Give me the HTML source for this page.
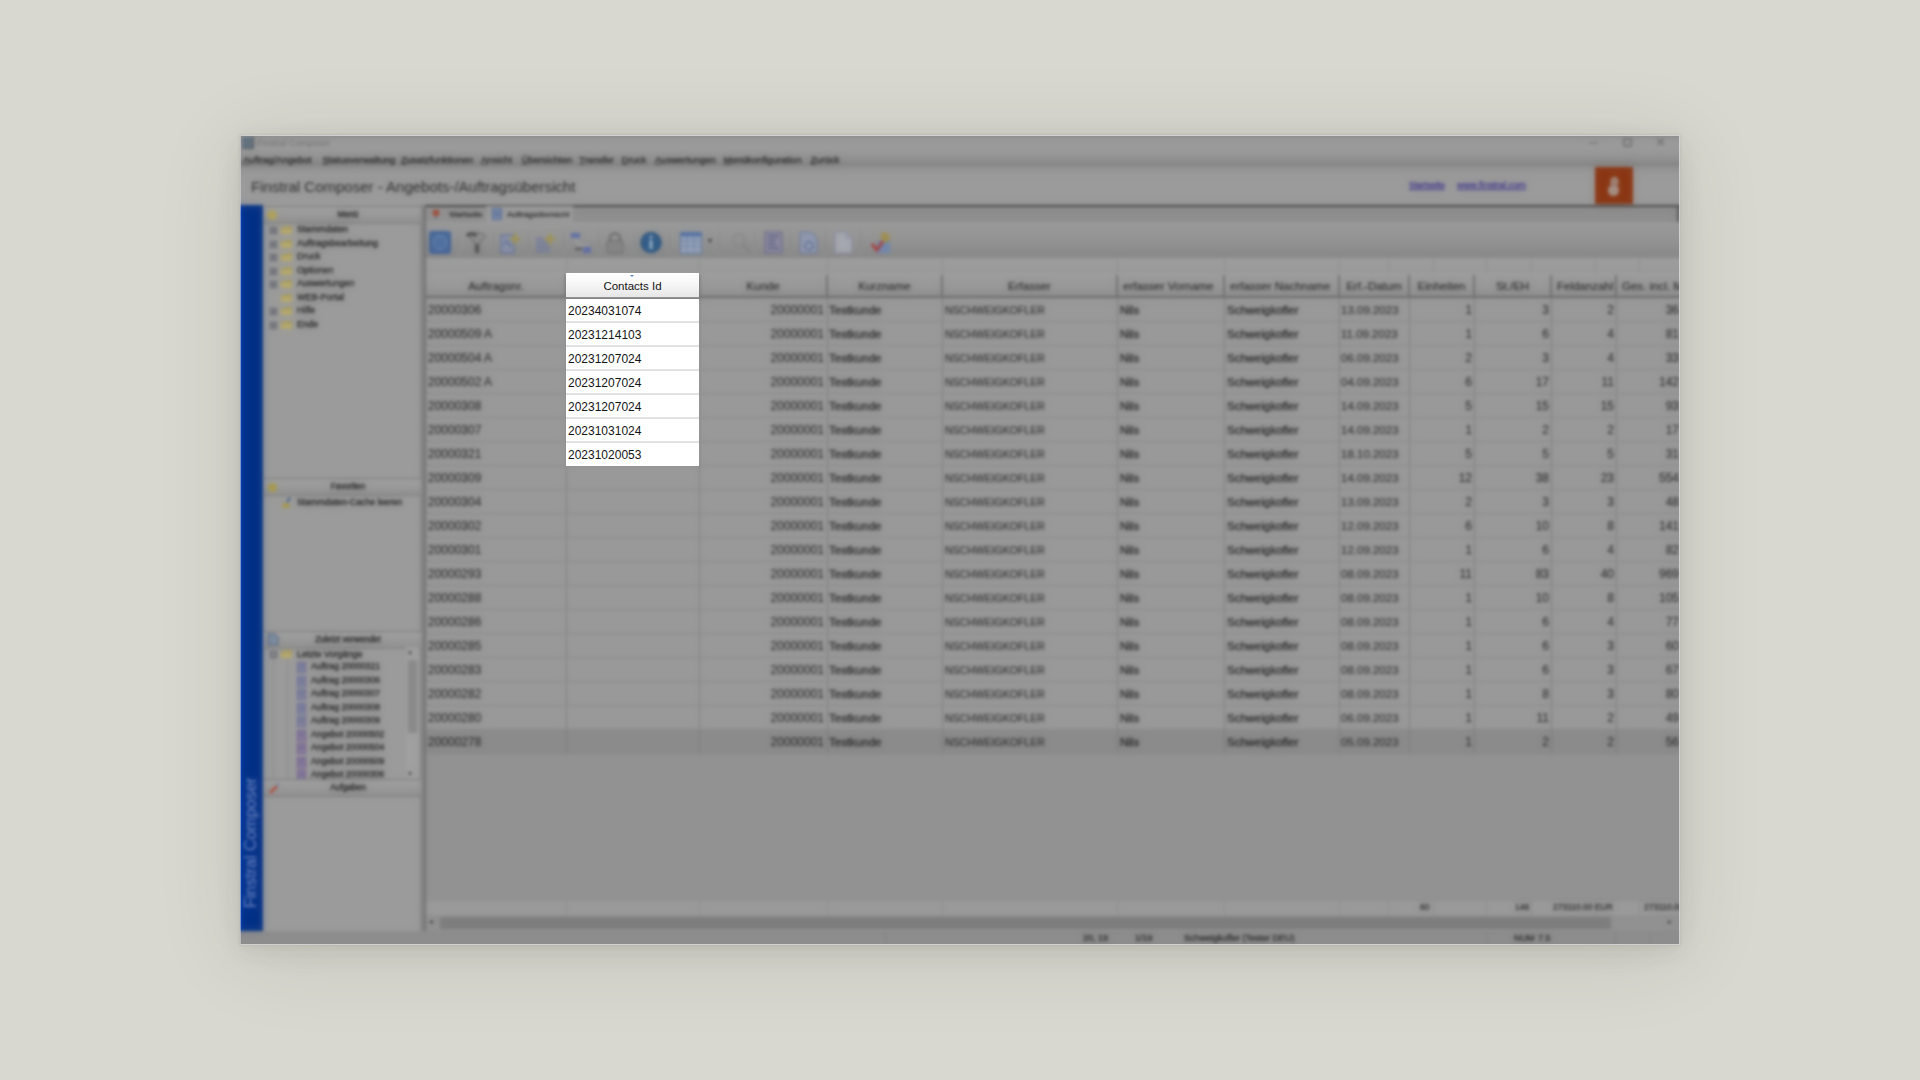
<!DOCTYPE html><html><head><meta charset="utf-8"><style>
html,body{margin:0;padding:0}
body{width:1920px;height:1080px;overflow:hidden;position:relative;background:#d8d8d0;font-family:"Liberation Sans",sans-serif}
#win{position:absolute;left:240px;top:135px;width:1440px;height:810px;overflow:hidden;box-shadow:0 0 3px rgba(40,40,30,0.10),0 6px 24px rgba(50,50,30,0.10),0 10px 80px rgba(50,50,30,0.12)}
#app{position:absolute;left:-240px;top:-135px;width:1920px;height:1080px;filter:url(#bl)}
#bord{position:absolute;left:0;top:0;width:1440px;height:810px;box-sizing:border-box;border:1px solid rgba(225,225,225,0.8);border-left-color:rgba(225,225,225,0.55)}
.t{position:absolute;white-space:nowrap;font-size:11.5px;line-height:14px;color:#1c1c1c}
.g{-webkit-text-stroke:0.1px #1c1c1c}
#hl{position:absolute;left:566px;top:273px;width:133px}
</style></head><body>
<svg width="0" height="0" style="position:absolute"><filter id="bl" x="-5%" y="-5%" width="110%" height="110%" color-interpolation-filters="sRGB"><feGaussianBlur in="SourceGraphic" stdDeviation="1.6" result="a"/><feGaussianBlur in="SourceGraphic" stdDeviation="4" result="b"/><feComposite in="a" in2="b" operator="arithmetic" k1="0" k2="0.7" k3="0.3" k4="0"/></filter></svg>
<div id="win"><div id="app">
<div style="position:absolute;left:220px;top:115px;width:1480px;height:850px;background:#999999"></div>
<div style="position:absolute;left:220px;top:115px;width:1480px;height:35px;background:linear-gradient(#8e8e8e 0,#8e8e8e 20px,#9a9a9a 26px,#9b9b9b)"></div>
<div style="position:absolute;left:242px;top:137px;width:12px;height:12px;background:#5e6e7c;border-right:1px solid #4a4a4a;border-bottom:1px solid #4a4a4a;box-sizing:border-box"></div>
<div class="t " style="left:257px;top:136px;font-size:9px;color:#6c6c6c">Finstral Composer</div>
<div style="position:absolute;left:1589px;top:142px;width:9px;height:2px;background:#7a7a7a"></div>
<div style="position:absolute;left:1623px;top:138px;width:9px;height:9px;border:2px solid #727272;box-sizing:border-box"></div>
<div class="t " style="left:1656px;top:135px;font-size:11px;color:#6e6e6e;-webkit-text-stroke:0.6px #6e6e6e">&#10005;</div>
<div style="position:absolute;left:220px;top:150px;width:1480px;height:16px;background:linear-gradient(#9a9a9a,#939393 45%,#828282)"></div>
<div class="t " style="left:243px;top:154px;font-size:9.5px;line-height:12px;color:#141414;-webkit-text-stroke:0.25px #141414"><u style="text-decoration-color:rgba(0,0,0,0.5)">A</u>uftrag/Angebot</div>
<div class="t " style="left:322.5px;top:154px;font-size:9.5px;line-height:12px;color:#141414;-webkit-text-stroke:0.25px #141414"><u style="text-decoration-color:rgba(0,0,0,0.5)">S</u>tatusverwaltung</div>
<div class="t " style="left:401px;top:154px;font-size:9.5px;line-height:12px;color:#141414;-webkit-text-stroke:0.25px #141414"><u style="text-decoration-color:rgba(0,0,0,0.5)">Z</u>usatzfunktionen</div>
<div class="t " style="left:481px;top:154px;font-size:9.5px;line-height:12px;color:#141414;-webkit-text-stroke:0.25px #141414"><u style="text-decoration-color:rgba(0,0,0,0.5)">A</u>nsicht</div>
<div class="t " style="left:521.5px;top:154px;font-size:9.5px;line-height:12px;color:#141414;-webkit-text-stroke:0.25px #141414"><u style="text-decoration-color:rgba(0,0,0,0.5)">Ü</u>bersichten</div>
<div class="t " style="left:579px;top:154px;font-size:9.5px;line-height:12px;color:#141414;-webkit-text-stroke:0.25px #141414"><u style="text-decoration-color:rgba(0,0,0,0.5)">T</u>ransfer</div>
<div class="t " style="left:621.5px;top:154px;font-size:9.5px;line-height:12px;color:#141414;-webkit-text-stroke:0.25px #141414"><u style="text-decoration-color:rgba(0,0,0,0.5)">D</u>ruck</div>
<div class="t " style="left:655px;top:154px;font-size:9.5px;line-height:12px;color:#141414;-webkit-text-stroke:0.25px #141414"><u style="text-decoration-color:rgba(0,0,0,0.5)">A</u>uswertungen</div>
<div class="t " style="left:723.5px;top:154px;font-size:9.5px;line-height:12px;color:#141414;-webkit-text-stroke:0.25px #141414"><u style="text-decoration-color:rgba(0,0,0,0.5)">M</u>enükonfiguration</div>
<div class="t " style="left:810.5px;top:154px;font-size:9.5px;line-height:12px;color:#141414;-webkit-text-stroke:0.25px #141414"><u style="text-decoration-color:rgba(0,0,0,0.5)">Z</u>urück</div>
<div style="position:absolute;left:220px;top:166px;width:1480px;height:39px;background:linear-gradient(#8f8f8f,#9a9a9a 20%,#9b9b9b)"></div>
<div class="t " style="left:251px;top:178px;font-size:15px;line-height:18px;color:#1a1a1a">Finstral Composer - Angebots-/Auftragsübersicht</div>
<div class="t " style="left:1409px;top:180px;font-size:8.5px;line-height:11px;color:#2a2288;-webkit-text-stroke:0.2px #2a2288"><u>Startseite</u></div>
<div class="t " style="left:1457px;top:180px;font-size:9.2px;line-height:11px;color:#2a2288;-webkit-text-stroke:0.2px #2a2288"><u>www.finstral.com</u></div>
<div style="position:absolute;left:1595px;top:167px;width:38px;height:38px;background:#8a3410"></div>
<svg style="position:absolute;left:1604px;top:174px" width="20" height="26" viewBox="0 0 20 26"><ellipse cx="10.5" cy="8" rx="4.2" ry="5.5" fill="#a08a80"/><ellipse cx="9.5" cy="16.5" rx="5.5" ry="5.5" fill="#a89890"/><path d="M8 11 Q10 12 13 11" stroke="#8a6a60" stroke-width="1" fill="none"/></svg>
<div style="position:absolute;left:220px;top:205px;width:43px;height:726px;background:linear-gradient(90deg,#0644c2 0,#0644c2 21px,#003088 22px,#002e84 38px,#023086 43px)"></div>
<div class="t" style="left:244px;top:908px;transform:rotate(-90deg);transform-origin:0 0;font-size:16px;line-height:14px;color:#8296cc">Finstral Composer</div>
<div style="position:absolute;left:263px;top:205px;width:162px;height:726px;background:#9b9b9b"></div>
<div style="position:absolute;left:420px;top:205px;width:5px;height:726px;background:#848484"></div>
<div style="position:absolute;left:264px;top:206px;width:157px;height:16px;background:linear-gradient(#a0a0a0,#9a9a9a 45%,#8e8e8e);border-bottom:1px solid #7c7c7c;border-top:1px solid #727272"></div><div style="position:absolute;left:267px;top:210px;width:10px;height:10px;background:#b0a258;border-radius:50%"></div><div class="t " style="left:264px;top:208px;width:168px;text-align:center;font-size:8.3px;line-height:12px;color:#080808;-webkit-text-stroke:0.25px #080808">Menü</div>
<div style="position:absolute;left:270px;top:227.0px;width:7px;height:7px;border:1px solid #4a5060;box-sizing:border-box;background:#969696"><div style="position:absolute;left:1px;top:2px;width:3px;height:1px;background:#2a3040"></div><div style="position:absolute;left:2px;top:1px;width:1px;height:3px;background:#2a3040"></div></div>
<svg style="position:absolute;left:281px;top:225.0px" width="12" height="10" viewBox="0 0 12 10"><path d="M0 2 L4 2 L5 1 L11 1 L11 9 L0 9Z" fill="#a89a58"/><path d="M0 4 L11 4 L11 9 L0 9Z" fill="#b8aa66"/></svg>
<div class="t " style="left:297px;top:223.0px;font-size:9px;line-height:13px;color:#080808;-webkit-text-stroke:0.25px #080808">Stammdaten</div>
<div style="position:absolute;left:270px;top:240.5px;width:7px;height:7px;border:1px solid #4a5060;box-sizing:border-box;background:#969696"><div style="position:absolute;left:1px;top:2px;width:3px;height:1px;background:#2a3040"></div><div style="position:absolute;left:2px;top:1px;width:1px;height:3px;background:#2a3040"></div></div>
<svg style="position:absolute;left:281px;top:238.5px" width="12" height="10" viewBox="0 0 12 10"><path d="M0 2 L4 2 L5 1 L11 1 L11 9 L0 9Z" fill="#a89a58"/><path d="M0 4 L11 4 L11 9 L0 9Z" fill="#b8aa66"/></svg>
<div class="t " style="left:297px;top:236.5px;font-size:9px;line-height:13px;color:#080808;-webkit-text-stroke:0.25px #080808">Auftragsbearbeitung</div>
<div style="position:absolute;left:270px;top:254.0px;width:7px;height:7px;border:1px solid #4a5060;box-sizing:border-box;background:#969696"><div style="position:absolute;left:1px;top:2px;width:3px;height:1px;background:#2a3040"></div><div style="position:absolute;left:2px;top:1px;width:1px;height:3px;background:#2a3040"></div></div>
<svg style="position:absolute;left:281px;top:252.0px" width="12" height="10" viewBox="0 0 12 10"><path d="M0 2 L4 2 L5 1 L11 1 L11 9 L0 9Z" fill="#a89a58"/><path d="M0 4 L11 4 L11 9 L0 9Z" fill="#b8aa66"/></svg>
<div class="t " style="left:297px;top:250.0px;font-size:9px;line-height:13px;color:#080808;-webkit-text-stroke:0.25px #080808">Druck</div>
<div style="position:absolute;left:270px;top:267.5px;width:7px;height:7px;border:1px solid #4a5060;box-sizing:border-box;background:#969696"><div style="position:absolute;left:1px;top:2px;width:3px;height:1px;background:#2a3040"></div><div style="position:absolute;left:2px;top:1px;width:1px;height:3px;background:#2a3040"></div></div>
<svg style="position:absolute;left:281px;top:265.5px" width="12" height="10" viewBox="0 0 12 10"><path d="M0 2 L4 2 L5 1 L11 1 L11 9 L0 9Z" fill="#a89a58"/><path d="M0 4 L11 4 L11 9 L0 9Z" fill="#b8aa66"/></svg>
<div class="t " style="left:297px;top:263.5px;font-size:9px;line-height:13px;color:#080808;-webkit-text-stroke:0.25px #080808">Optionen</div>
<div style="position:absolute;left:270px;top:281.0px;width:7px;height:7px;border:1px solid #4a5060;box-sizing:border-box;background:#969696"><div style="position:absolute;left:1px;top:2px;width:3px;height:1px;background:#2a3040"></div><div style="position:absolute;left:2px;top:1px;width:1px;height:3px;background:#2a3040"></div></div>
<svg style="position:absolute;left:281px;top:279.0px" width="12" height="10" viewBox="0 0 12 10"><path d="M0 2 L4 2 L5 1 L11 1 L11 9 L0 9Z" fill="#a89a58"/><path d="M0 4 L11 4 L11 9 L0 9Z" fill="#b8aa66"/></svg>
<div class="t " style="left:297px;top:277.0px;font-size:9px;line-height:13px;color:#080808;-webkit-text-stroke:0.25px #080808">Auswertungen</div>
<svg style="position:absolute;left:281px;top:292.5px" width="12" height="10" viewBox="0 0 12 10"><path d="M0 2 L4 2 L5 1 L11 1 L11 9 L0 9Z" fill="#a89a58"/><path d="M0 4 L11 4 L11 9 L0 9Z" fill="#b8aa66"/></svg>
<div class="t " style="left:297px;top:290.5px;font-size:9px;line-height:13px;color:#080808;-webkit-text-stroke:0.25px #080808">WEB-Portal</div>
<div style="position:absolute;left:270px;top:308.0px;width:7px;height:7px;border:1px solid #4a5060;box-sizing:border-box;background:#969696"><div style="position:absolute;left:1px;top:2px;width:3px;height:1px;background:#2a3040"></div><div style="position:absolute;left:2px;top:1px;width:1px;height:3px;background:#2a3040"></div></div>
<svg style="position:absolute;left:281px;top:306.0px" width="12" height="10" viewBox="0 0 12 10"><path d="M0 2 L4 2 L5 1 L11 1 L11 9 L0 9Z" fill="#a89a58"/><path d="M0 4 L11 4 L11 9 L0 9Z" fill="#b8aa66"/></svg>
<div class="t " style="left:297px;top:304.0px;font-size:9px;line-height:13px;color:#080808;-webkit-text-stroke:0.25px #080808">Hilfe</div>
<div style="position:absolute;left:270px;top:321.5px;width:7px;height:7px;border:1px solid #4a5060;box-sizing:border-box;background:#969696"><div style="position:absolute;left:1px;top:2px;width:3px;height:1px;background:#2a3040"></div><div style="position:absolute;left:2px;top:1px;width:1px;height:3px;background:#2a3040"></div></div>
<svg style="position:absolute;left:281px;top:319.5px" width="12" height="10" viewBox="0 0 12 10"><path d="M0 2 L4 2 L5 1 L11 1 L11 9 L0 9Z" fill="#a89a58"/><path d="M0 4 L11 4 L11 9 L0 9Z" fill="#b8aa66"/></svg>
<div class="t " style="left:297px;top:317.5px;font-size:9px;line-height:13px;color:#080808;-webkit-text-stroke:0.25px #080808">Ende</div>
<div style="position:absolute;left:264px;top:478px;width:157px;height:16px;background:linear-gradient(#a0a0a0,#9a9a9a 45%,#8e8e8e);border-bottom:1px solid #7c7c7c;border-top:1px solid #727272"></div><div style="position:absolute;left:268px;top:483px;width:9px;height:9px;background:#a89a48;border-radius:50%"></div><div class="t " style="left:264px;top:480px;width:168px;text-align:center;font-size:8.3px;line-height:12px;color:#080808;-webkit-text-stroke:0.25px #080808">Favoriten</div>
<svg style="position:absolute;left:281px;top:497px" width="12" height="12" viewBox="0 0 12 12"><path d="M8 0 L10 1 L7 6 L5 5Z" fill="#3a5a90"/><path d="M2 6 L8 6 L9 11 L1 11Z" fill="#a89848"/></svg>
<div class="t " style="left:297px;top:496px;font-size:8.8px;line-height:13px;color:#080808;-webkit-text-stroke:0.25px #080808">Stammdaten-Cache leeren</div>
<div style="position:absolute;left:264px;top:631px;width:157px;height:16px;background:linear-gradient(#a0a0a0,#9a9a9a 45%,#8e8e8e);border-bottom:1px solid #7c7c7c;border-top:1px solid #727272"></div><svg style="position:absolute;left:267px;top:633px" width="12" height="13" viewBox="0 0 12 13"><path d="M1 1 L8 1 L11 4 L11 12 L1 12Z" fill="#7a8aa0" stroke="#4f6078" stroke-width="1"/></svg><div class="t " style="left:264px;top:633px;width:168px;text-align:center;font-size:8.3px;line-height:12px;color:#080808;-webkit-text-stroke:0.25px #080808">Zuletzt verwendet</div>
<div style="position:absolute;left:270px;top:651px;width:7px;height:7px;border:1px solid #4a5060;box-sizing:border-box;background:#969696"><div style="position:absolute;left:1px;top:2px;width:3px;height:1px;background:#3a4050"></div></div>
<svg style="position:absolute;left:281px;top:649px" width="12" height="10" viewBox="0 0 12 10"><path d="M0 2 L4 2 L5 1 L11 1 L11 9 L0 9Z" fill="#a89a58"/><path d="M0 4 L11 4 L11 9 L0 9Z" fill="#b8aa66"/></svg>
<div class="t " style="left:297px;top:647.5px;font-size:9px;line-height:13px;color:#080808;-webkit-text-stroke:0.25px #080808">Letzte Vorgänge</div>
<div style="position:absolute;left:273px;top:658px;width:1px;height:122px;border-left:1px dotted #707070"></div>
<div style="position:absolute;left:287px;top:660px;width:1px;height:118px;border-left:1px dotted #707070"></div>
<svg style="position:absolute;left:297px;top:662.0px" width="9" height="11" viewBox="0 0 9 11"><rect x="0.5" y="0.5" width="8" height="10" fill="#8a8aa0" stroke="#5a6090"/><path d="M2 3H7M2 5H7M2 7H7" stroke="#5a6090"/></svg>
<div class="t " style="left:311px;top:660.0px;font-size:8.7px;line-height:13px;color:#080808;-webkit-text-stroke:0.25px #080808">Auftrag 20000321</div>
<svg style="position:absolute;left:297px;top:675.5px" width="9" height="11" viewBox="0 0 9 11"><rect x="0.5" y="0.5" width="8" height="10" fill="#8a8aa0" stroke="#5a6090"/><path d="M2 3H7M2 5H7M2 7H7" stroke="#5a6090"/></svg>
<div class="t " style="left:311px;top:673.5px;font-size:8.7px;line-height:13px;color:#080808;-webkit-text-stroke:0.25px #080808">Auftrag 20000306</div>
<svg style="position:absolute;left:297px;top:689.0px" width="9" height="11" viewBox="0 0 9 11"><rect x="0.5" y="0.5" width="8" height="10" fill="#8a8aa0" stroke="#5a6090"/><path d="M2 3H7M2 5H7M2 7H7" stroke="#5a6090"/></svg>
<div class="t " style="left:311px;top:687.0px;font-size:8.7px;line-height:13px;color:#080808;-webkit-text-stroke:0.25px #080808">Auftrag 20000307</div>
<svg style="position:absolute;left:297px;top:702.5px" width="9" height="11" viewBox="0 0 9 11"><rect x="0.5" y="0.5" width="8" height="10" fill="#8a8aa0" stroke="#5a6090"/><path d="M2 3H7M2 5H7M2 7H7" stroke="#5a6090"/></svg>
<div class="t " style="left:311px;top:700.5px;font-size:8.7px;line-height:13px;color:#080808;-webkit-text-stroke:0.25px #080808">Auftrag 20000308</div>
<svg style="position:absolute;left:297px;top:716.0px" width="9" height="11" viewBox="0 0 9 11"><rect x="0.5" y="0.5" width="8" height="10" fill="#8a8aa0" stroke="#5a6090"/><path d="M2 3H7M2 5H7M2 7H7" stroke="#5a6090"/></svg>
<div class="t " style="left:311px;top:714.0px;font-size:8.7px;line-height:13px;color:#080808;-webkit-text-stroke:0.25px #080808">Auftrag 20000309</div>
<svg style="position:absolute;left:297px;top:729.5px" width="9" height="11" viewBox="0 0 9 11"><rect x="0.5" y="0.5" width="8" height="10" fill="#8a8aa0" stroke="#6a4a88"/><path d="M2 3H7M2 5H7M2 7H7" stroke="#6a4a88"/></svg>
<div class="t " style="left:311px;top:727.5px;font-size:8.7px;line-height:13px;color:#080808;-webkit-text-stroke:0.25px #080808">Angebot 20000502</div>
<svg style="position:absolute;left:297px;top:743.0px" width="9" height="11" viewBox="0 0 9 11"><rect x="0.5" y="0.5" width="8" height="10" fill="#8a8aa0" stroke="#6a4a88"/><path d="M2 3H7M2 5H7M2 7H7" stroke="#6a4a88"/></svg>
<div class="t " style="left:311px;top:741.0px;font-size:8.7px;line-height:13px;color:#080808;-webkit-text-stroke:0.25px #080808">Angebot 20000504</div>
<svg style="position:absolute;left:297px;top:756.5px" width="9" height="11" viewBox="0 0 9 11"><rect x="0.5" y="0.5" width="8" height="10" fill="#8a8aa0" stroke="#6a4a88"/><path d="M2 3H7M2 5H7M2 7H7" stroke="#6a4a88"/></svg>
<div class="t " style="left:311px;top:754.5px;font-size:8.7px;line-height:13px;color:#080808;-webkit-text-stroke:0.25px #080808">Angebot 20000509</div>
<svg style="position:absolute;left:297px;top:770.0px" width="9" height="11" viewBox="0 0 9 11"><rect x="0.5" y="0.5" width="8" height="10" fill="#8a8aa0" stroke="#6a4a88"/><path d="M2 3H7M2 5H7M2 7H7" stroke="#6a4a88"/></svg>
<div class="t " style="left:311px;top:768.0px;font-size:8.7px;line-height:13px;color:#080808;-webkit-text-stroke:0.25px #080808">Angebot 20000306</div>
<div style="position:absolute;left:406px;top:647px;width:13px;height:133px;background:#a0a0a0"></div>
<div style="position:absolute;left:408px;top:660px;width:9px;height:73px;background:#888888;border-radius:1px"></div>
<div class="t " style="left:408px;top:648px;font-size:8px;line-height:8px;color:#404040">&#9652;</div>
<div class="t " style="left:408px;top:770px;font-size:8px;line-height:8px;color:#404040">&#9662;</div>
<div style="position:absolute;left:264px;top:779px;width:157px;height:16px;background:linear-gradient(#a0a0a0,#9a9a9a 45%,#8e8e8e);border-bottom:1px solid #7c7c7c;border-top:1px solid #727272"></div><svg style="position:absolute;left:267px;top:782px" width="12" height="12" viewBox="0 0 12 12"><path d="M2 10 L9 3 L11 5 L4 12Z" fill="#b04830"/><path d="M9 3 L11 1 L12 2 L11 5Z" fill="#6080b0"/></svg><div class="t " style="left:264px;top:781px;width:168px;text-align:center;font-size:8.3px;line-height:12px;color:#080808;-webkit-text-stroke:0.25px #080808">Aufgaben</div>
<div style="position:absolute;left:424px;top:204px;width:1280px;height:730px;background:#959595"></div>
<div style="position:absolute;left:424px;top:205px;width:1280px;height:2px;background:#3e3e3e"></div>
<div style="position:absolute;left:424px;top:205px;width:2px;height:726px;background:#6c6c6c"></div>
<div style="position:absolute;left:426px;top:207px;width:1260px;height:15px;background:#8e8e8e"></div>
<div style="position:absolute;left:1677px;top:205px;width:2px;height:17px;background:#4c4c4c"></div>
<div style="position:absolute;left:427px;top:207px;width:58px;height:15px;background:#929292"></div>
<svg style="position:absolute;left:431px;top:208px" width="10" height="11" viewBox="0 0 10 11"><circle cx="5" cy="5" r="3.5" fill="#a04830"/><path d="M5 7 L3 11 L7 11Z" fill="#6a7a90"/></svg>
<div class="t " style="left:449px;top:209px;font-size:8px;line-height:12px;color:#111;-webkit-text-stroke:0.2px #111">Startseite</div>
<div style="position:absolute;left:486px;top:206px;width:87px;height:16px;background:#9c9c9c"></div>
<svg style="position:absolute;left:492px;top:208px" width="10" height="12" viewBox="0 0 10 12"><rect x="0.5" y="0.5" width="9" height="11" fill="#7a8cac" stroke="#4a6090"/><path d="M2 4H8M2 6H8M2 8H8" stroke="#4a6090"/></svg>
<div class="t " style="left:507px;top:209px;font-size:8px;line-height:12px;color:#111;-webkit-text-stroke:0.2px #111">Auftragsübersicht</div>
<div style="position:absolute;left:426px;top:222px;width:1260px;height:36px;background:linear-gradient(#9a9a9a,#939393 50%,#868686)"></div>
<svg style="position:absolute;left:429px;top:231px" width="22" height="23" viewBox="0 0 22 23"><rect x="0" y="0" width="22" height="23" rx="3" fill="#44669a"/><rect x="1" y="1" width="20" height="21" rx="2.5" fill="none" stroke="#385888" stroke-width="1"/><circle cx="11" cy="11.5" r="6.5" fill="none" stroke="#7590b4" stroke-width="1.3"/><circle cx="11" cy="11.5" r="2.8" fill="none" stroke="#7590b4" stroke-width="1"/></svg>
<svg style="position:absolute;left:465px;top:231px" width="22" height="23" viewBox="0 0 22 23"><path d="M3 4 C7 1 17 1 21 5 L14 12 L14 22 L10 20 L10 12 Z" fill="#8e8e8e" stroke="#5a5a5a" stroke-width="1"/><path d="M2 5 C4 2 9 2 11 5" stroke="#3c3c3c" stroke-width="3" fill="none"/><path d="M12 13 L12 22" stroke="#3c3c3c" stroke-width="2.5"/></svg>
<svg style="position:absolute;left:500px;top:231px" width="22" height="23" viewBox="0 0 22 23"><rect x="1" y="4" width="13" height="18" fill="#8690a8" stroke="#566494"/><path d="M3 14 L7 10 L11 16" stroke="#404a80" fill="none"/><path d="M15 1 L17 6 L22 8 L17 10 L15 15 L13 10 L8 8 L13 6Z" fill="#a0944e"/></svg>
<svg style="position:absolute;left:535px;top:231px" width="22" height="23" viewBox="0 0 22 23"><path d="M1 8H13M1 12H13M1 16H15M1 20H15" stroke="#6a74a0" stroke-width="2"/><path d="M15 1 L17 6 L22 8 L17 10 L15 15 L13 10 L8 8 L13 6Z" fill="#a0944e"/></svg>
<svg style="position:absolute;left:570px;top:231px" width="22" height="23" viewBox="0 0 22 23"><rect x="1" y="2" width="9" height="5" fill="#5a6aa8"/><path d="M6 8 C6 14 12 14 18 14" stroke="#b0b0b0" stroke-width="1.2" fill="none"/><rect x="13" y="16" width="8" height="6" fill="#5a6aa8"/><path d="M5 18H12" stroke="#444" stroke-width="2"/></svg>
<svg style="position:absolute;left:605px;top:231px" width="22" height="23" viewBox="0 0 22 23"><path d="M5 11 L5 7 C5 1 15 1 15 7 L15 11" stroke="#6a6a6a" stroke-width="2.5" fill="none"/><rect x="2" y="10" width="16" height="12" rx="2" fill="#858585" stroke="#666" stroke-width="1"/></svg>
<svg style="position:absolute;left:640px;top:231px" width="22" height="23" viewBox="0 0 22 23"><circle cx="11" cy="11.5" r="10.5" fill="#2a5886"/><circle cx="11" cy="11.5" r="10" fill="none" stroke="#1e4670" stroke-width="1"/><rect x="9.5" y="9" width="3" height="9" fill="#b0c0d0"/><circle cx="11" cy="6" r="1.6" fill="#b0c0d0"/></svg>
<svg style="position:absolute;left:680px;top:231px" width="22" height="23" viewBox="0 0 22 23"><rect x="0.5" y="1.5" width="21" height="21" fill="#94a2b8" stroke="#56709e"/><rect x="0.5" y="1.5" width="21" height="4" fill="#4d6ca4"/><path d="M1 10H21M1 15H21M7 6V22M14 6V22" stroke="#7082a2"/></svg>
<svg style="position:absolute;left:730px;top:231px" width="22" height="23" viewBox="0 0 22 23"><circle cx="9" cy="9" r="6" fill="none" stroke="#888" stroke-width="2"/><path d="M13 13 L20 21" stroke="#838383" stroke-width="3"/></svg>
<svg style="position:absolute;left:764px;top:231px" width="22" height="23" viewBox="0 0 22 23"><rect x="1" y="1" width="17" height="21" fill="#88889e" stroke="#606088"/><path d="M4 5H15M4 9H11M4 13H11M4 17H15" stroke="#5a5a80" stroke-width="1.5"/></svg>
<svg style="position:absolute;left:799px;top:231px" width="22" height="23" viewBox="0 0 22 23"><path d="M1 1 L12 1 L18 7 L18 22 L1 22Z" fill="#8e98ae" stroke="#647096"/><circle cx="10" cy="15" r="4" fill="none" stroke="#5a6890" stroke-width="1.5"/></svg>
<svg style="position:absolute;left:834px;top:231px" width="22" height="23" viewBox="0 0 22 23"><path d="M1 1 L12 1 L18 7 L18 22 L1 22Z" fill="#a6a8b0" stroke="#7e849c"/><path d="M12 1 L12 7 L18 7" stroke="#7e849c" fill="none"/></svg>
<svg style="position:absolute;left:871px;top:231px" width="22" height="23" viewBox="0 0 22 23"><rect x="6" y="10" width="13" height="12" fill="#7088b0"/><path d="M10 2 C16 0 21 4 18 10 L13 12 L10 6Z" fill="#a09048"/><path d="M1 13 L6 19 L12 10" stroke="#a83838" stroke-width="3" fill="none"/></svg>
<div style="position:absolute;left:458px;top:227px;width:1px;height:30px;background:linear-gradient(#969696,#848484,#969696)"></div>
<div style="position:absolute;left:493px;top:227px;width:1px;height:30px;background:linear-gradient(#969696,#848484,#969696)"></div>
<div style="position:absolute;left:527.5px;top:227px;width:1px;height:30px;background:linear-gradient(#969696,#848484,#969696)"></div>
<div style="position:absolute;left:563px;top:227px;width:1px;height:30px;background:linear-gradient(#969696,#848484,#969696)"></div>
<div style="position:absolute;left:598px;top:227px;width:1px;height:30px;background:linear-gradient(#969696,#848484,#969696)"></div>
<div style="position:absolute;left:633.5px;top:227px;width:1px;height:30px;background:linear-gradient(#969696,#848484,#969696)"></div>
<div style="position:absolute;left:668.5px;top:227px;width:1px;height:30px;background:linear-gradient(#969696,#848484,#969696)"></div>
<div style="position:absolute;left:719px;top:227px;width:1px;height:30px;background:linear-gradient(#969696,#848484,#969696)"></div>
<div style="position:absolute;left:754px;top:227px;width:1px;height:30px;background:linear-gradient(#969696,#848484,#969696)"></div>
<div style="position:absolute;left:789.5px;top:227px;width:1px;height:30px;background:linear-gradient(#969696,#848484,#969696)"></div>
<div style="position:absolute;left:824.5px;top:227px;width:1px;height:30px;background:linear-gradient(#969696,#848484,#969696)"></div>
<div style="position:absolute;left:860px;top:227px;width:1px;height:30px;background:linear-gradient(#969696,#848484,#969696)"></div>
<div class="t " style="left:708px;top:236px;font-size:8px;line-height:10px;color:#222">&#9662;</div>
<div style="position:absolute;left:426px;top:258px;width:1280px;height:15px;background:linear-gradient(#9e9e9e,#999999);border-bottom:1px solid #888"></div>
<div style="position:absolute;left:566px;top:258px;width:1px;height:15px;background:#8c8c8c"></div>
<div style="position:absolute;left:699px;top:258px;width:1px;height:15px;background:#8c8c8c"></div>
<div style="position:absolute;left:827px;top:258px;width:1px;height:15px;background:#8c8c8c"></div>
<div style="position:absolute;left:942px;top:258px;width:1px;height:15px;background:#8c8c8c"></div>
<div style="position:absolute;left:1117px;top:258px;width:1px;height:15px;background:#8c8c8c"></div>
<div style="position:absolute;left:1224px;top:258px;width:1px;height:15px;background:#8c8c8c"></div>
<div style="position:absolute;left:1339px;top:258px;width:1px;height:15px;background:#8c8c8c"></div>
<div style="position:absolute;left:1388px;top:258px;width:1px;height:15px;background:#8c8c8c"></div>
<div style="position:absolute;left:1433px;top:258px;width:1px;height:15px;background:#8c8c8c"></div>
<div style="position:absolute;left:1486px;top:258px;width:1px;height:15px;background:#8c8c8c"></div>
<div style="position:absolute;left:1531px;top:258px;width:1px;height:15px;background:#8c8c8c"></div>
<div style="position:absolute;left:1595px;top:258px;width:1px;height:15px;background:#8c8c8c"></div>
<div style="position:absolute;left:1639px;top:258px;width:1px;height:15px;background:#8c8c8c"></div>
<div style="position:absolute;left:426px;top:273px;width:1280px;height:25px;background:linear-gradient(#9e9e9e,#979797 60%,#8e8e8e)"></div>
<div style="position:absolute;left:426px;top:296px;width:1280px;height:2px;background:#616161"></div>
<div class="t " style="left:426px;top:279px;width:140px;text-align:center;font-size:11.5px;color:#141414;-webkit-text-stroke:0.1px #141414">Auftragsnr.</div>
<div style="position:absolute;left:565px;top:275px;width:2px;height:22px;background:#6a6a6a"></div>
<div class="t " style="left:566px;top:279px;width:133px;text-align:center;font-size:11.5px;color:#141414;-webkit-text-stroke:0.1px #141414">Contacts Id</div>
<div style="position:absolute;left:698px;top:275px;width:2px;height:22px;background:#6a6a6a"></div>
<div class="t " style="left:699px;top:279px;width:128px;text-align:center;font-size:11.5px;color:#141414;-webkit-text-stroke:0.1px #141414">Kunde</div>
<div style="position:absolute;left:826px;top:275px;width:2px;height:22px;background:#6a6a6a"></div>
<div class="t " style="left:827px;top:279px;width:115px;text-align:center;font-size:11.5px;color:#141414;-webkit-text-stroke:0.1px #141414">Kurzname</div>
<div style="position:absolute;left:941px;top:275px;width:2px;height:22px;background:#6a6a6a"></div>
<div class="t " style="left:942px;top:279px;width:175px;text-align:center;font-size:11.5px;color:#141414;-webkit-text-stroke:0.1px #141414">Erfasser</div>
<div style="position:absolute;left:1116px;top:275px;width:2px;height:22px;background:#6a6a6a"></div>
<div class="t " style="left:1123px;top:279px;font-size:11.5px;color:#141414;-webkit-text-stroke:0.1px #141414">erfasser Vorname</div>
<div style="position:absolute;left:1223px;top:275px;width:2px;height:22px;background:#6a6a6a"></div>
<div class="t " style="left:1230px;top:279px;font-size:11.5px;color:#141414;-webkit-text-stroke:0.1px #141414">erfasser Nachname</div>
<div style="position:absolute;left:1338px;top:275px;width:2px;height:22px;background:#6a6a6a"></div>
<div class="t " style="left:1339px;top:279px;width:70px;text-align:center;font-size:11.5px;color:#141414;-webkit-text-stroke:0.1px #141414">Erf.-Datum</div>
<div style="position:absolute;left:1408px;top:275px;width:2px;height:22px;background:#6a6a6a"></div>
<div class="t " style="left:1409px;top:279px;width:65px;text-align:center;font-size:11.5px;color:#141414;-webkit-text-stroke:0.1px #141414">Einheiten</div>
<div style="position:absolute;left:1473px;top:275px;width:2px;height:22px;background:#6a6a6a"></div>
<div class="t " style="left:1474px;top:279px;width:77px;text-align:center;font-size:11.5px;color:#141414;-webkit-text-stroke:0.1px #141414">St./EH</div>
<div style="position:absolute;left:1550px;top:275px;width:2px;height:22px;background:#6a6a6a"></div>
<div class="t " style="left:1557px;top:279px;font-size:11.5px;color:#141414;-webkit-text-stroke:0.1px #141414">Feldanzahl</div>
<div style="position:absolute;left:1615px;top:275px;width:2px;height:22px;background:#6a6a6a"></div>
<div class="t " style="left:1622px;top:279px;font-size:11.5px;color:#141414;-webkit-text-stroke:0.1px #141414">Ges. incl. M</div>
<div style="position:absolute;left:426px;top:298px;width:1280px;height:24px;background:#999999"></div>
<div style="position:absolute;left:426px;top:321px;width:1280px;height:1px;background:#868686"></div>
<div class="t g" style="left:428px;top:303px;font-size:12px">20000306</div>
<div class="t g" style="left:699px;top:303px;width:125px;text-align:right;font-size:12px">20000001</div>
<div class="t " style="left:829px;top:303px;font-size:11.5px;-webkit-text-stroke:0.35px #1c1c1c">Testkunde</div>
<div class="t g" style="left:945px;top:303px;font-size:10.5px">NSCHWEIGKOFLER</div>
<div class="t " style="left:1120px;top:303px;font-size:11.5px;-webkit-text-stroke:0.35px #1c1c1c">Nils</div>
<div class="t " style="left:1227px;top:303px;font-size:11.5px;-webkit-text-stroke:0.35px #1c1c1c">Schweigkofler</div>
<div class="t g" style="left:1341px;top:303px;font-size:11.5px">13.09.2023</div>
<div class="t g" style="left:1409px;top:303px;width:63px;text-align:right;font-size:12px">1</div>
<div class="t g" style="left:1474px;top:303px;width:75px;text-align:right;font-size:12px">3</div>
<div class="t g" style="left:1551px;top:303px;width:63px;text-align:right;font-size:12px">2</div>
<div class="t g" style="left:1616px;top:303px;width:63px;text-align:right;font-size:12px">36</div>
<div style="position:absolute;left:426px;top:322px;width:1280px;height:24px;background:#999999"></div>
<div style="position:absolute;left:426px;top:345px;width:1280px;height:1px;background:#868686"></div>
<div class="t g" style="left:428px;top:327px;font-size:12px">20000509 A</div>
<div class="t g" style="left:699px;top:327px;width:125px;text-align:right;font-size:12px">20000001</div>
<div class="t " style="left:829px;top:327px;font-size:11.5px;-webkit-text-stroke:0.35px #1c1c1c">Testkunde</div>
<div class="t g" style="left:945px;top:327px;font-size:10.5px">NSCHWEIGKOFLER</div>
<div class="t " style="left:1120px;top:327px;font-size:11.5px;-webkit-text-stroke:0.35px #1c1c1c">Nils</div>
<div class="t " style="left:1227px;top:327px;font-size:11.5px;-webkit-text-stroke:0.35px #1c1c1c">Schweigkofler</div>
<div class="t g" style="left:1341px;top:327px;font-size:11.5px">11.09.2023</div>
<div class="t g" style="left:1409px;top:327px;width:63px;text-align:right;font-size:12px">1</div>
<div class="t g" style="left:1474px;top:327px;width:75px;text-align:right;font-size:12px">6</div>
<div class="t g" style="left:1551px;top:327px;width:63px;text-align:right;font-size:12px">4</div>
<div class="t g" style="left:1616px;top:327px;width:63px;text-align:right;font-size:12px">81</div>
<div style="position:absolute;left:426px;top:346px;width:1280px;height:24px;background:#999999"></div>
<div style="position:absolute;left:426px;top:369px;width:1280px;height:1px;background:#868686"></div>
<div class="t g" style="left:428px;top:351px;font-size:12px">20000504 A</div>
<div class="t g" style="left:699px;top:351px;width:125px;text-align:right;font-size:12px">20000001</div>
<div class="t " style="left:829px;top:351px;font-size:11.5px;-webkit-text-stroke:0.35px #1c1c1c">Testkunde</div>
<div class="t g" style="left:945px;top:351px;font-size:10.5px">NSCHWEIGKOFLER</div>
<div class="t " style="left:1120px;top:351px;font-size:11.5px;-webkit-text-stroke:0.35px #1c1c1c">Nils</div>
<div class="t " style="left:1227px;top:351px;font-size:11.5px;-webkit-text-stroke:0.35px #1c1c1c">Schweigkofler</div>
<div class="t g" style="left:1341px;top:351px;font-size:11.5px">06.09.2023</div>
<div class="t g" style="left:1409px;top:351px;width:63px;text-align:right;font-size:12px">2</div>
<div class="t g" style="left:1474px;top:351px;width:75px;text-align:right;font-size:12px">3</div>
<div class="t g" style="left:1551px;top:351px;width:63px;text-align:right;font-size:12px">4</div>
<div class="t g" style="left:1616px;top:351px;width:63px;text-align:right;font-size:12px">33</div>
<div style="position:absolute;left:426px;top:370px;width:1280px;height:24px;background:#999999"></div>
<div style="position:absolute;left:426px;top:393px;width:1280px;height:1px;background:#868686"></div>
<div class="t g" style="left:428px;top:375px;font-size:12px">20000502 A</div>
<div class="t g" style="left:699px;top:375px;width:125px;text-align:right;font-size:12px">20000001</div>
<div class="t " style="left:829px;top:375px;font-size:11.5px;-webkit-text-stroke:0.35px #1c1c1c">Testkunde</div>
<div class="t g" style="left:945px;top:375px;font-size:10.5px">NSCHWEIGKOFLER</div>
<div class="t " style="left:1120px;top:375px;font-size:11.5px;-webkit-text-stroke:0.35px #1c1c1c">Nils</div>
<div class="t " style="left:1227px;top:375px;font-size:11.5px;-webkit-text-stroke:0.35px #1c1c1c">Schweigkofler</div>
<div class="t g" style="left:1341px;top:375px;font-size:11.5px">04.09.2023</div>
<div class="t g" style="left:1409px;top:375px;width:63px;text-align:right;font-size:12px">6</div>
<div class="t g" style="left:1474px;top:375px;width:75px;text-align:right;font-size:12px">17</div>
<div class="t g" style="left:1551px;top:375px;width:63px;text-align:right;font-size:12px">11</div>
<div class="t g" style="left:1616px;top:375px;width:63px;text-align:right;font-size:12px">142</div>
<div style="position:absolute;left:426px;top:394px;width:1280px;height:24px;background:#999999"></div>
<div style="position:absolute;left:426px;top:417px;width:1280px;height:1px;background:#868686"></div>
<div class="t g" style="left:428px;top:399px;font-size:12px">20000308</div>
<div class="t g" style="left:699px;top:399px;width:125px;text-align:right;font-size:12px">20000001</div>
<div class="t " style="left:829px;top:399px;font-size:11.5px;-webkit-text-stroke:0.35px #1c1c1c">Testkunde</div>
<div class="t g" style="left:945px;top:399px;font-size:10.5px">NSCHWEIGKOFLER</div>
<div class="t " style="left:1120px;top:399px;font-size:11.5px;-webkit-text-stroke:0.35px #1c1c1c">Nils</div>
<div class="t " style="left:1227px;top:399px;font-size:11.5px;-webkit-text-stroke:0.35px #1c1c1c">Schweigkofler</div>
<div class="t g" style="left:1341px;top:399px;font-size:11.5px">14.09.2023</div>
<div class="t g" style="left:1409px;top:399px;width:63px;text-align:right;font-size:12px">5</div>
<div class="t g" style="left:1474px;top:399px;width:75px;text-align:right;font-size:12px">15</div>
<div class="t g" style="left:1551px;top:399px;width:63px;text-align:right;font-size:12px">15</div>
<div class="t g" style="left:1616px;top:399px;width:63px;text-align:right;font-size:12px">93</div>
<div style="position:absolute;left:426px;top:418px;width:1280px;height:24px;background:#999999"></div>
<div style="position:absolute;left:426px;top:441px;width:1280px;height:1px;background:#868686"></div>
<div class="t g" style="left:428px;top:423px;font-size:12px">20000307</div>
<div class="t g" style="left:699px;top:423px;width:125px;text-align:right;font-size:12px">20000001</div>
<div class="t " style="left:829px;top:423px;font-size:11.5px;-webkit-text-stroke:0.35px #1c1c1c">Testkunde</div>
<div class="t g" style="left:945px;top:423px;font-size:10.5px">NSCHWEIGKOFLER</div>
<div class="t " style="left:1120px;top:423px;font-size:11.5px;-webkit-text-stroke:0.35px #1c1c1c">Nils</div>
<div class="t " style="left:1227px;top:423px;font-size:11.5px;-webkit-text-stroke:0.35px #1c1c1c">Schweigkofler</div>
<div class="t g" style="left:1341px;top:423px;font-size:11.5px">14.09.2023</div>
<div class="t g" style="left:1409px;top:423px;width:63px;text-align:right;font-size:12px">1</div>
<div class="t g" style="left:1474px;top:423px;width:75px;text-align:right;font-size:12px">2</div>
<div class="t g" style="left:1551px;top:423px;width:63px;text-align:right;font-size:12px">2</div>
<div class="t g" style="left:1616px;top:423px;width:63px;text-align:right;font-size:12px">17</div>
<div style="position:absolute;left:426px;top:442px;width:1280px;height:24px;background:#999999"></div>
<div style="position:absolute;left:426px;top:465px;width:1280px;height:1px;background:#868686"></div>
<div class="t g" style="left:428px;top:447px;font-size:12px">20000321</div>
<div class="t g" style="left:699px;top:447px;width:125px;text-align:right;font-size:12px">20000001</div>
<div class="t " style="left:829px;top:447px;font-size:11.5px;-webkit-text-stroke:0.35px #1c1c1c">Testkunde</div>
<div class="t g" style="left:945px;top:447px;font-size:10.5px">NSCHWEIGKOFLER</div>
<div class="t " style="left:1120px;top:447px;font-size:11.5px;-webkit-text-stroke:0.35px #1c1c1c">Nils</div>
<div class="t " style="left:1227px;top:447px;font-size:11.5px;-webkit-text-stroke:0.35px #1c1c1c">Schweigkofler</div>
<div class="t g" style="left:1341px;top:447px;font-size:11.5px">18.10.2023</div>
<div class="t g" style="left:1409px;top:447px;width:63px;text-align:right;font-size:12px">5</div>
<div class="t g" style="left:1474px;top:447px;width:75px;text-align:right;font-size:12px">5</div>
<div class="t g" style="left:1551px;top:447px;width:63px;text-align:right;font-size:12px">5</div>
<div class="t g" style="left:1616px;top:447px;width:63px;text-align:right;font-size:12px">31</div>
<div style="position:absolute;left:426px;top:466px;width:1280px;height:24px;background:#999999"></div>
<div style="position:absolute;left:426px;top:489px;width:1280px;height:1px;background:#868686"></div>
<div class="t g" style="left:428px;top:471px;font-size:12px">20000309</div>
<div class="t g" style="left:699px;top:471px;width:125px;text-align:right;font-size:12px">20000001</div>
<div class="t " style="left:829px;top:471px;font-size:11.5px;-webkit-text-stroke:0.35px #1c1c1c">Testkunde</div>
<div class="t g" style="left:945px;top:471px;font-size:10.5px">NSCHWEIGKOFLER</div>
<div class="t " style="left:1120px;top:471px;font-size:11.5px;-webkit-text-stroke:0.35px #1c1c1c">Nils</div>
<div class="t " style="left:1227px;top:471px;font-size:11.5px;-webkit-text-stroke:0.35px #1c1c1c">Schweigkofler</div>
<div class="t g" style="left:1341px;top:471px;font-size:11.5px">14.09.2023</div>
<div class="t g" style="left:1409px;top:471px;width:63px;text-align:right;font-size:12px">12</div>
<div class="t g" style="left:1474px;top:471px;width:75px;text-align:right;font-size:12px">38</div>
<div class="t g" style="left:1551px;top:471px;width:63px;text-align:right;font-size:12px">23</div>
<div class="t g" style="left:1616px;top:471px;width:63px;text-align:right;font-size:12px">554</div>
<div style="position:absolute;left:426px;top:490px;width:1280px;height:24px;background:#999999"></div>
<div style="position:absolute;left:426px;top:513px;width:1280px;height:1px;background:#868686"></div>
<div class="t g" style="left:428px;top:495px;font-size:12px">20000304</div>
<div class="t g" style="left:699px;top:495px;width:125px;text-align:right;font-size:12px">20000001</div>
<div class="t " style="left:829px;top:495px;font-size:11.5px;-webkit-text-stroke:0.35px #1c1c1c">Testkunde</div>
<div class="t g" style="left:945px;top:495px;font-size:10.5px">NSCHWEIGKOFLER</div>
<div class="t " style="left:1120px;top:495px;font-size:11.5px;-webkit-text-stroke:0.35px #1c1c1c">Nils</div>
<div class="t " style="left:1227px;top:495px;font-size:11.5px;-webkit-text-stroke:0.35px #1c1c1c">Schweigkofler</div>
<div class="t g" style="left:1341px;top:495px;font-size:11.5px">13.09.2023</div>
<div class="t g" style="left:1409px;top:495px;width:63px;text-align:right;font-size:12px">2</div>
<div class="t g" style="left:1474px;top:495px;width:75px;text-align:right;font-size:12px">3</div>
<div class="t g" style="left:1551px;top:495px;width:63px;text-align:right;font-size:12px">3</div>
<div class="t g" style="left:1616px;top:495px;width:63px;text-align:right;font-size:12px">48</div>
<div style="position:absolute;left:426px;top:514px;width:1280px;height:24px;background:#999999"></div>
<div style="position:absolute;left:426px;top:537px;width:1280px;height:1px;background:#868686"></div>
<div class="t g" style="left:428px;top:519px;font-size:12px">20000302</div>
<div class="t g" style="left:699px;top:519px;width:125px;text-align:right;font-size:12px">20000001</div>
<div class="t " style="left:829px;top:519px;font-size:11.5px;-webkit-text-stroke:0.35px #1c1c1c">Testkunde</div>
<div class="t g" style="left:945px;top:519px;font-size:10.5px">NSCHWEIGKOFLER</div>
<div class="t " style="left:1120px;top:519px;font-size:11.5px;-webkit-text-stroke:0.35px #1c1c1c">Nils</div>
<div class="t " style="left:1227px;top:519px;font-size:11.5px;-webkit-text-stroke:0.35px #1c1c1c">Schweigkofler</div>
<div class="t g" style="left:1341px;top:519px;font-size:11.5px">12.09.2023</div>
<div class="t g" style="left:1409px;top:519px;width:63px;text-align:right;font-size:12px">6</div>
<div class="t g" style="left:1474px;top:519px;width:75px;text-align:right;font-size:12px">10</div>
<div class="t g" style="left:1551px;top:519px;width:63px;text-align:right;font-size:12px">8</div>
<div class="t g" style="left:1616px;top:519px;width:63px;text-align:right;font-size:12px">141</div>
<div style="position:absolute;left:426px;top:538px;width:1280px;height:24px;background:#999999"></div>
<div style="position:absolute;left:426px;top:561px;width:1280px;height:1px;background:#868686"></div>
<div class="t g" style="left:428px;top:543px;font-size:12px">20000301</div>
<div class="t g" style="left:699px;top:543px;width:125px;text-align:right;font-size:12px">20000001</div>
<div class="t " style="left:829px;top:543px;font-size:11.5px;-webkit-text-stroke:0.35px #1c1c1c">Testkunde</div>
<div class="t g" style="left:945px;top:543px;font-size:10.5px">NSCHWEIGKOFLER</div>
<div class="t " style="left:1120px;top:543px;font-size:11.5px;-webkit-text-stroke:0.35px #1c1c1c">Nils</div>
<div class="t " style="left:1227px;top:543px;font-size:11.5px;-webkit-text-stroke:0.35px #1c1c1c">Schweigkofler</div>
<div class="t g" style="left:1341px;top:543px;font-size:11.5px">12.09.2023</div>
<div class="t g" style="left:1409px;top:543px;width:63px;text-align:right;font-size:12px">1</div>
<div class="t g" style="left:1474px;top:543px;width:75px;text-align:right;font-size:12px">6</div>
<div class="t g" style="left:1551px;top:543px;width:63px;text-align:right;font-size:12px">4</div>
<div class="t g" style="left:1616px;top:543px;width:63px;text-align:right;font-size:12px">82</div>
<div style="position:absolute;left:426px;top:562px;width:1280px;height:24px;background:#999999"></div>
<div style="position:absolute;left:426px;top:585px;width:1280px;height:1px;background:#868686"></div>
<div class="t g" style="left:428px;top:567px;font-size:12px">20000293</div>
<div class="t g" style="left:699px;top:567px;width:125px;text-align:right;font-size:12px">20000001</div>
<div class="t " style="left:829px;top:567px;font-size:11.5px;-webkit-text-stroke:0.35px #1c1c1c">Testkunde</div>
<div class="t g" style="left:945px;top:567px;font-size:10.5px">NSCHWEIGKOFLER</div>
<div class="t " style="left:1120px;top:567px;font-size:11.5px;-webkit-text-stroke:0.35px #1c1c1c">Nils</div>
<div class="t " style="left:1227px;top:567px;font-size:11.5px;-webkit-text-stroke:0.35px #1c1c1c">Schweigkofler</div>
<div class="t g" style="left:1341px;top:567px;font-size:11.5px">08.09.2023</div>
<div class="t g" style="left:1409px;top:567px;width:63px;text-align:right;font-size:12px">11</div>
<div class="t g" style="left:1474px;top:567px;width:75px;text-align:right;font-size:12px">83</div>
<div class="t g" style="left:1551px;top:567px;width:63px;text-align:right;font-size:12px">40</div>
<div class="t g" style="left:1616px;top:567px;width:63px;text-align:right;font-size:12px">969</div>
<div style="position:absolute;left:426px;top:586px;width:1280px;height:24px;background:#999999"></div>
<div style="position:absolute;left:426px;top:609px;width:1280px;height:1px;background:#868686"></div>
<div class="t g" style="left:428px;top:591px;font-size:12px">20000288</div>
<div class="t g" style="left:699px;top:591px;width:125px;text-align:right;font-size:12px">20000001</div>
<div class="t " style="left:829px;top:591px;font-size:11.5px;-webkit-text-stroke:0.35px #1c1c1c">Testkunde</div>
<div class="t g" style="left:945px;top:591px;font-size:10.5px">NSCHWEIGKOFLER</div>
<div class="t " style="left:1120px;top:591px;font-size:11.5px;-webkit-text-stroke:0.35px #1c1c1c">Nils</div>
<div class="t " style="left:1227px;top:591px;font-size:11.5px;-webkit-text-stroke:0.35px #1c1c1c">Schweigkofler</div>
<div class="t g" style="left:1341px;top:591px;font-size:11.5px">08.09.2023</div>
<div class="t g" style="left:1409px;top:591px;width:63px;text-align:right;font-size:12px">1</div>
<div class="t g" style="left:1474px;top:591px;width:75px;text-align:right;font-size:12px">10</div>
<div class="t g" style="left:1551px;top:591px;width:63px;text-align:right;font-size:12px">8</div>
<div class="t g" style="left:1616px;top:591px;width:63px;text-align:right;font-size:12px">105</div>
<div style="position:absolute;left:426px;top:610px;width:1280px;height:24px;background:#999999"></div>
<div style="position:absolute;left:426px;top:633px;width:1280px;height:1px;background:#868686"></div>
<div class="t g" style="left:428px;top:615px;font-size:12px">20000286</div>
<div class="t g" style="left:699px;top:615px;width:125px;text-align:right;font-size:12px">20000001</div>
<div class="t " style="left:829px;top:615px;font-size:11.5px;-webkit-text-stroke:0.35px #1c1c1c">Testkunde</div>
<div class="t g" style="left:945px;top:615px;font-size:10.5px">NSCHWEIGKOFLER</div>
<div class="t " style="left:1120px;top:615px;font-size:11.5px;-webkit-text-stroke:0.35px #1c1c1c">Nils</div>
<div class="t " style="left:1227px;top:615px;font-size:11.5px;-webkit-text-stroke:0.35px #1c1c1c">Schweigkofler</div>
<div class="t g" style="left:1341px;top:615px;font-size:11.5px">08.09.2023</div>
<div class="t g" style="left:1409px;top:615px;width:63px;text-align:right;font-size:12px">1</div>
<div class="t g" style="left:1474px;top:615px;width:75px;text-align:right;font-size:12px">6</div>
<div class="t g" style="left:1551px;top:615px;width:63px;text-align:right;font-size:12px">4</div>
<div class="t g" style="left:1616px;top:615px;width:63px;text-align:right;font-size:12px">77</div>
<div style="position:absolute;left:426px;top:634px;width:1280px;height:24px;background:#999999"></div>
<div style="position:absolute;left:426px;top:657px;width:1280px;height:1px;background:#868686"></div>
<div class="t g" style="left:428px;top:639px;font-size:12px">20000285</div>
<div class="t g" style="left:699px;top:639px;width:125px;text-align:right;font-size:12px">20000001</div>
<div class="t " style="left:829px;top:639px;font-size:11.5px;-webkit-text-stroke:0.35px #1c1c1c">Testkunde</div>
<div class="t g" style="left:945px;top:639px;font-size:10.5px">NSCHWEIGKOFLER</div>
<div class="t " style="left:1120px;top:639px;font-size:11.5px;-webkit-text-stroke:0.35px #1c1c1c">Nils</div>
<div class="t " style="left:1227px;top:639px;font-size:11.5px;-webkit-text-stroke:0.35px #1c1c1c">Schweigkofler</div>
<div class="t g" style="left:1341px;top:639px;font-size:11.5px">08.09.2023</div>
<div class="t g" style="left:1409px;top:639px;width:63px;text-align:right;font-size:12px">1</div>
<div class="t g" style="left:1474px;top:639px;width:75px;text-align:right;font-size:12px">6</div>
<div class="t g" style="left:1551px;top:639px;width:63px;text-align:right;font-size:12px">3</div>
<div class="t g" style="left:1616px;top:639px;width:63px;text-align:right;font-size:12px">60</div>
<div style="position:absolute;left:426px;top:658px;width:1280px;height:24px;background:#999999"></div>
<div style="position:absolute;left:426px;top:681px;width:1280px;height:1px;background:#868686"></div>
<div class="t g" style="left:428px;top:663px;font-size:12px">20000283</div>
<div class="t g" style="left:699px;top:663px;width:125px;text-align:right;font-size:12px">20000001</div>
<div class="t " style="left:829px;top:663px;font-size:11.5px;-webkit-text-stroke:0.35px #1c1c1c">Testkunde</div>
<div class="t g" style="left:945px;top:663px;font-size:10.5px">NSCHWEIGKOFLER</div>
<div class="t " style="left:1120px;top:663px;font-size:11.5px;-webkit-text-stroke:0.35px #1c1c1c">Nils</div>
<div class="t " style="left:1227px;top:663px;font-size:11.5px;-webkit-text-stroke:0.35px #1c1c1c">Schweigkofler</div>
<div class="t g" style="left:1341px;top:663px;font-size:11.5px">08.09.2023</div>
<div class="t g" style="left:1409px;top:663px;width:63px;text-align:right;font-size:12px">1</div>
<div class="t g" style="left:1474px;top:663px;width:75px;text-align:right;font-size:12px">6</div>
<div class="t g" style="left:1551px;top:663px;width:63px;text-align:right;font-size:12px">3</div>
<div class="t g" style="left:1616px;top:663px;width:63px;text-align:right;font-size:12px">67</div>
<div style="position:absolute;left:426px;top:682px;width:1280px;height:24px;background:#999999"></div>
<div style="position:absolute;left:426px;top:705px;width:1280px;height:1px;background:#868686"></div>
<div class="t g" style="left:428px;top:687px;font-size:12px">20000282</div>
<div class="t g" style="left:699px;top:687px;width:125px;text-align:right;font-size:12px">20000001</div>
<div class="t " style="left:829px;top:687px;font-size:11.5px;-webkit-text-stroke:0.35px #1c1c1c">Testkunde</div>
<div class="t g" style="left:945px;top:687px;font-size:10.5px">NSCHWEIGKOFLER</div>
<div class="t " style="left:1120px;top:687px;font-size:11.5px;-webkit-text-stroke:0.35px #1c1c1c">Nils</div>
<div class="t " style="left:1227px;top:687px;font-size:11.5px;-webkit-text-stroke:0.35px #1c1c1c">Schweigkofler</div>
<div class="t g" style="left:1341px;top:687px;font-size:11.5px">08.09.2023</div>
<div class="t g" style="left:1409px;top:687px;width:63px;text-align:right;font-size:12px">1</div>
<div class="t g" style="left:1474px;top:687px;width:75px;text-align:right;font-size:12px">8</div>
<div class="t g" style="left:1551px;top:687px;width:63px;text-align:right;font-size:12px">3</div>
<div class="t g" style="left:1616px;top:687px;width:63px;text-align:right;font-size:12px">80</div>
<div style="position:absolute;left:426px;top:706px;width:1280px;height:24px;background:#999999"></div>
<div style="position:absolute;left:426px;top:729px;width:1280px;height:1px;background:#868686"></div>
<div class="t g" style="left:428px;top:711px;font-size:12px">20000280</div>
<div class="t g" style="left:699px;top:711px;width:125px;text-align:right;font-size:12px">20000001</div>
<div class="t " style="left:829px;top:711px;font-size:11.5px;-webkit-text-stroke:0.35px #1c1c1c">Testkunde</div>
<div class="t g" style="left:945px;top:711px;font-size:10.5px">NSCHWEIGKOFLER</div>
<div class="t " style="left:1120px;top:711px;font-size:11.5px;-webkit-text-stroke:0.35px #1c1c1c">Nils</div>
<div class="t " style="left:1227px;top:711px;font-size:11.5px;-webkit-text-stroke:0.35px #1c1c1c">Schweigkofler</div>
<div class="t g" style="left:1341px;top:711px;font-size:11.5px">06.09.2023</div>
<div class="t g" style="left:1409px;top:711px;width:63px;text-align:right;font-size:12px">1</div>
<div class="t g" style="left:1474px;top:711px;width:75px;text-align:right;font-size:12px">11</div>
<div class="t g" style="left:1551px;top:711px;width:63px;text-align:right;font-size:12px">2</div>
<div class="t g" style="left:1616px;top:711px;width:63px;text-align:right;font-size:12px">49</div>
<div style="position:absolute;left:426px;top:730px;width:1280px;height:24px;background:#8b8b8b"></div>
<div style="position:absolute;left:426px;top:753px;width:1280px;height:1px;background:#868686"></div>
<div class="t g" style="left:428px;top:735px;font-size:12px">20000278</div>
<div class="t g" style="left:699px;top:735px;width:125px;text-align:right;font-size:12px">20000001</div>
<div class="t " style="left:829px;top:735px;font-size:11.5px;-webkit-text-stroke:0.35px #1c1c1c">Testkunde</div>
<div class="t g" style="left:945px;top:735px;font-size:10.5px">NSCHWEIGKOFLER</div>
<div class="t " style="left:1120px;top:735px;font-size:11.5px;-webkit-text-stroke:0.35px #1c1c1c">Nils</div>
<div class="t " style="left:1227px;top:735px;font-size:11.5px;-webkit-text-stroke:0.35px #1c1c1c">Schweigkofler</div>
<div class="t g" style="left:1341px;top:735px;font-size:11.5px">05.09.2023</div>
<div class="t g" style="left:1409px;top:735px;width:63px;text-align:right;font-size:12px">1</div>
<div class="t g" style="left:1474px;top:735px;width:75px;text-align:right;font-size:12px">2</div>
<div class="t g" style="left:1551px;top:735px;width:63px;text-align:right;font-size:12px">2</div>
<div class="t g" style="left:1616px;top:735px;width:63px;text-align:right;font-size:12px">56</div>
<div style="position:absolute;left:566px;top:298px;width:1px;height:456px;background:#7a7a7a"></div>
<div style="position:absolute;left:699px;top:298px;width:1px;height:456px;background:#7a7a7a"></div>
<div style="position:absolute;left:827px;top:298px;width:1px;height:456px;background:#7a7a7a"></div>
<div style="position:absolute;left:942px;top:298px;width:1px;height:456px;background:#7a7a7a"></div>
<div style="position:absolute;left:1117px;top:298px;width:1px;height:456px;background:#7a7a7a"></div>
<div style="position:absolute;left:1224px;top:298px;width:1px;height:456px;background:#7a7a7a"></div>
<div style="position:absolute;left:1339px;top:298px;width:1px;height:456px;background:#7a7a7a"></div>
<div style="position:absolute;left:1409px;top:298px;width:1px;height:456px;background:#7a7a7a"></div>
<div style="position:absolute;left:1474px;top:298px;width:1px;height:456px;background:#7a7a7a"></div>
<div style="position:absolute;left:1551px;top:298px;width:1px;height:456px;background:#7a7a7a"></div>
<div style="position:absolute;left:1616px;top:298px;width:1px;height:456px;background:#7a7a7a"></div>
<div style="position:absolute;left:426px;top:754px;width:1280px;height:147px;background:#929292"></div>
<div style="position:absolute;left:426px;top:900px;width:1280px;height:15px;background:#9a9a9a;border-top:1px solid #8c8c8c;box-sizing:border-box"></div>
<div style="position:absolute;left:566px;top:901px;width:1px;height:14px;background:#8c8c8c"></div>
<div style="position:absolute;left:699px;top:901px;width:1px;height:14px;background:#8c8c8c"></div>
<div style="position:absolute;left:827px;top:901px;width:1px;height:14px;background:#8c8c8c"></div>
<div style="position:absolute;left:942px;top:901px;width:1px;height:14px;background:#8c8c8c"></div>
<div style="position:absolute;left:1117px;top:901px;width:1px;height:14px;background:#8c8c8c"></div>
<div style="position:absolute;left:1224px;top:901px;width:1px;height:14px;background:#8c8c8c"></div>
<div style="position:absolute;left:1339px;top:901px;width:1px;height:14px;background:#8c8c8c"></div>
<div style="position:absolute;left:1388px;top:901px;width:1px;height:14px;background:#8c8c8c"></div>
<div style="position:absolute;left:1433px;top:901px;width:1px;height:14px;background:#8c8c8c"></div>
<div style="position:absolute;left:1486px;top:901px;width:1px;height:14px;background:#8c8c8c"></div>
<div style="position:absolute;left:1531px;top:901px;width:1px;height:14px;background:#8c8c8c"></div>
<div style="position:absolute;left:1595px;top:901px;width:1px;height:14px;background:#8c8c8c"></div>
<div style="position:absolute;left:1639px;top:901px;width:1px;height:14px;background:#8c8c8c"></div>
<div class="t " style="left:1420px;top:902px;font-size:8.5px;line-height:11px;color:#101010;-webkit-text-stroke:0.2px #101010">60</div>
<div class="t " style="left:1515px;top:902px;font-size:8.5px;line-height:11px;color:#101010;-webkit-text-stroke:0.2px #101010">146</div>
<div class="t " style="left:1553px;top:902px;font-size:8.5px;line-height:11px;color:#101010;-webkit-text-stroke:0.2px #101010">273110.00 EUR</div>
<div class="t " style="left:1644px;top:902px;font-size:8.5px;line-height:11px;color:#101010;-webkit-text-stroke:0.2px #101010">273110.00</div>
<div style="position:absolute;left:426px;top:915px;width:1280px;height:16px;background:#919191"></div>
<div style="position:absolute;left:440px;top:917px;width:1171px;height:12px;background:#7c7c7c"></div>
<div class="t " style="left:429px;top:917px;font-size:8px;line-height:10px;color:#333">&#9666;</div>
<div class="t " style="left:1668px;top:917px;font-size:8px;line-height:10px;color:#333">&#9656;</div>
<div style="position:absolute;left:220px;top:931px;width:1480px;height:40px;background:linear-gradient(#8c8c8c,#8e8e8e 60%,#989898)"></div>
<div class="t " style="left:1083px;top:932px;font-size:9px;line-height:12px;color:#101010;-webkit-text-stroke:0.2px #101010">20, 19</div>
<div class="t " style="left:1135px;top:932px;font-size:9px;line-height:12px;color:#101010;-webkit-text-stroke:0.2px #101010">1/19</div>
<div class="t " style="left:1184px;top:932px;font-size:9px;line-height:12px;color:#101010;-webkit-text-stroke:0.2px #101010">Schweigkofler (Tester DEU)</div>
<div class="t " style="left:1514px;top:932px;font-size:9px;line-height:12px;color:#101010;-webkit-text-stroke:0.2px #101010">NUM</div>
<div class="t " style="left:1538px;top:932px;font-size:9px;line-height:12px;color:#101010;-webkit-text-stroke:0.2px #101010">7.5</div>
<div style="position:absolute;left:885px;top:932px;width:1px;height:12px;background:#808080"></div>
<div style="position:absolute;left:1486px;top:932px;width:1px;height:12px;background:#808080"></div>
<div style="position:absolute;left:1615px;top:932px;width:1px;height:12px;background:#808080"></div>
<div style="position:absolute;left:1650px;top:932px;width:1px;height:12px;background:#808080"></div>
</div><div id="bord"></div></div>
<div id="hl">
<div style="position:absolute;left:0;top:0;width:133px;height:24px;background:linear-gradient(#ffffff,#f7f7f7 45%,#e6e6e6)"></div>
<div style="position:absolute;left:0;top:24px;width:133px;height:2px;background:linear-gradient(#9a9a9a,#7c7c7c)"></div>
<div style="position:absolute;left:64px;top:2px;width:0;height:0;border-left:2.5px solid transparent;border-right:2.5px solid transparent;border-top:2.5px solid #5a8ac8"></div>
<div class="t" style="left:0;top:6px;width:133px;text-align:center;font-size:11.5px;line-height:14px;color:#141414">Contacts Id</div>
<div style="position:absolute;left:0;top:26px;width:133px;height:22px;background:#fff"></div>
<div style="position:absolute;left:0;top:48px;width:133px;height:2px;background:linear-gradient(#e8e8e8,#dcdcdc)"></div>
<div class="t" style="left:2px;top:30.5px;font-size:12px;line-height:15px;color:#141414">20234031074</div>
<div style="position:absolute;left:0;top:50px;width:133px;height:22px;background:#fff"></div>
<div style="position:absolute;left:0;top:72px;width:133px;height:2px;background:linear-gradient(#e8e8e8,#dcdcdc)"></div>
<div class="t" style="left:2px;top:54.5px;font-size:12px;line-height:15px;color:#141414">20231214103</div>
<div style="position:absolute;left:0;top:74px;width:133px;height:22px;background:#fff"></div>
<div style="position:absolute;left:0;top:96px;width:133px;height:2px;background:linear-gradient(#e8e8e8,#dcdcdc)"></div>
<div class="t" style="left:2px;top:78.5px;font-size:12px;line-height:15px;color:#141414">20231207024</div>
<div style="position:absolute;left:0;top:98px;width:133px;height:22px;background:#fff"></div>
<div style="position:absolute;left:0;top:120px;width:133px;height:2px;background:linear-gradient(#e8e8e8,#dcdcdc)"></div>
<div class="t" style="left:2px;top:102.5px;font-size:12px;line-height:15px;color:#141414">20231207024</div>
<div style="position:absolute;left:0;top:122px;width:133px;height:22px;background:#fff"></div>
<div style="position:absolute;left:0;top:144px;width:133px;height:2px;background:linear-gradient(#e8e8e8,#dcdcdc)"></div>
<div class="t" style="left:2px;top:126.5px;font-size:12px;line-height:15px;color:#141414">20231207024</div>
<div style="position:absolute;left:0;top:146px;width:133px;height:22px;background:#fff"></div>
<div style="position:absolute;left:0;top:168px;width:133px;height:2px;background:linear-gradient(#e8e8e8,#dcdcdc)"></div>
<div class="t" style="left:2px;top:150.5px;font-size:12px;line-height:15px;color:#141414">20231031024</div>
<div style="position:absolute;left:0;top:170px;width:133px;height:23px;background:#fff"></div>
<div class="t" style="left:2px;top:174.5px;font-size:12px;line-height:15px;color:#141414">20231020053</div>
</div>
</body></html>
